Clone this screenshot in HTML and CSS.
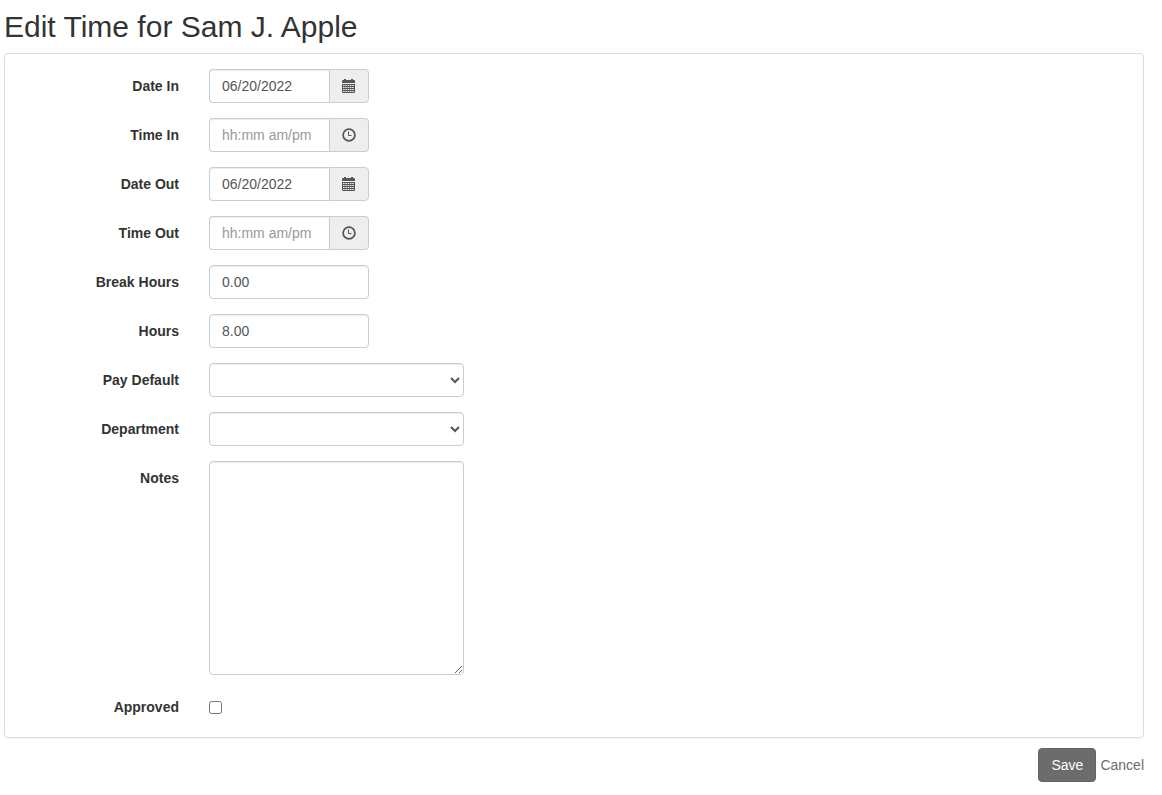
FILE: index.html
```html
<!DOCTYPE html>
<html lang="en">
<head>
<meta charset="utf-8">
<title>Edit Time for Sam J. Apple</title>
<link rel="stylesheet" href="styles.css">
</head>
<body>
<svg class="symbols" aria-hidden="true">
  <symbol id="calendar" viewBox="0 0 14 14">
    <path fill="currentColor" d="M0 2Q0 1 1 1H2V0H4V1H9V0H11V1H12Q13 1 13 2V4H0ZM0 5H13V13Q13 14 12 14H1Q0 14 0 13Z"/>
    <path fill="none" stroke="#eee" stroke-width="1" stroke-dasharray="1.600 .7" d="M1 6.500H12M1 8.500H12M1 10.500H12M1 12.500H12"/>
  </symbol>
  <symbol id="clock" viewBox="0 0 14 14">
    <circle cx="7" cy="7" r="5.900" fill="none" stroke="currentColor" stroke-width="1.700"/>
    <path d="M6.500 3.500V7.500H9.500" fill="none" stroke="currentColor" stroke-width="1"/>
  </symbol>
</svg>
<main class="page">
  <h1 class="title">Edit Time for Sam J. Apple</h1>
  <form class="form">
    <div class="panel">
      <div class="row">
        <label class="label" for="date-in">Date In</label>
        <div class="group">
          <input class="control" id="date-in" type="text" value="06/20/2022">
          <button class="addon" type="button" aria-label="Choose date in"><svg class="icon"><use href="#calendar"/></svg></button>
        </div>
      </div>
      <div class="row">
        <label class="label" for="time-in">Time In</label>
        <div class="group">
          <input class="control" id="time-in" type="text" placeholder="hh:mm am/pm">
          <button class="addon" type="button" aria-label="Choose time in"><svg class="icon"><use href="#clock"/></svg></button>
        </div>
      </div>
      <div class="row">
        <label class="label" for="date-out">Date Out</label>
        <div class="group">
          <input class="control" id="date-out" type="text" value="06/20/2022">
          <button class="addon" type="button" aria-label="Choose date out"><svg class="icon"><use href="#calendar"/></svg></button>
        </div>
      </div>
      <div class="row">
        <label class="label" for="time-out">Time Out</label>
        <div class="group">
          <input class="control" id="time-out" type="text" placeholder="hh:mm am/pm">
          <button class="addon" type="button" aria-label="Choose time out"><svg class="icon"><use href="#clock"/></svg></button>
        </div>
      </div>
      <div class="row">
        <label class="label" for="break-hours">Break Hours</label>
        <input class="control short" id="break-hours" type="text" value="0.00">
      </div>
      <div class="row">
        <label class="label" for="hours">Hours</label>
        <input class="control short" id="hours" type="text" value="8.00">
      </div>
      <div class="row">
        <label class="label" for="pay-default">Pay Default</label>
        <select class="control select" id="pay-default"><option></option></select>
      </div>
      <div class="row">
        <label class="label" for="department">Department</label>
        <select class="control select" id="department"><option></option></select>
      </div>
      <div class="row">
        <label class="label" for="notes">Notes</label>
        <textarea class="control notes" id="notes" rows="10"></textarea>
      </div>
      <div class="row">
        <label class="label" for="approved">Approved</label>
        <input class="check" id="approved" type="checkbox">
      </div>
    </div>
    <div class="actions">
      <button class="save" type="submit">Save</button>
      <a class="cancel" href="#">Cancel</a>
    </div>
  </form>
</main>
</body>
</html>
```
FILE: styles.css
```css
* {
  box-sizing: border-box;
}

body {
  margin: 0;
  background: #fff;
  color: #333;
  font: 14px/20px "Liberation Sans", Arial, sans-serif;
}

.symbols {
  display: none;
}

.page {
  padding: 10px 18px 10px 4px;
}

.title {
  margin: 0 0 10px;
  font-size: 30px;
  font-weight: 400;
  line-height: 33px;
}

.panel {
  display: flex;
  flex-direction: column;
  gap: 15px;
  padding: 15px;
  border: 1px solid #ddd;
  border-radius: 4px;
  box-shadow: 0 1px 1px rgba(0, 0, 0, 0.05);
}

.row {
  display: grid;
  grid-template-columns: 159px 255px;
  column-gap: 30px;
  align-items: start;
  min-height: 32px;
}

.label {
  padding-top: 7px;
  font-weight: 700;
  text-align: right;
}

.control {
  display: block;
  width: 100%;
  min-width: 0;
  height: 34px;
  margin: 0;
  padding: 6px 12px;
  border: 1px solid #ccc;
  border-radius: 4px;
  background: #fff;
  box-shadow: inset 0 1px 1px rgba(0, 0, 0, 0.075);
  color: #555;
  font: inherit;
}

.control::placeholder {
  color: #999;
  opacity: 1;
}

.short,
.group {
  width: 160px;
}

.group {
  display: flex;
}

.group .control {
  flex: 1;
  border-right: 0;
  border-radius: 4px 0 0 4px;
}

.addon {
  display: flex;
  align-items: center;
  justify-content: center;
  width: 40px;
  padding: 0;
  border: 1px solid #ccc;
  border-radius: 0 4px 4px 0;
  background: #eee;
  color: #555;
}

.icon {
  width: 14px;
  height: 14px;
}

.select {
  padding-right: 1px;
}

.notes {
  height: auto;
  resize: both;
}

.check {
  width: 13px;
  height: 13px;
  margin: 11px 0 0;
}

.actions {
  display: flex;
  align-items: center;
  justify-content: flex-end;
  gap: 4px;
  margin-top: 10px;
}

.save {
  padding: 6px 12px;
  border: 1px solid #636363;
  border-radius: 4px;
  background: #6c6c6c;
  color: #fff;
  font: inherit;
}

.cancel {
  color: #6c6c6c;
  text-decoration: none;
}
```
